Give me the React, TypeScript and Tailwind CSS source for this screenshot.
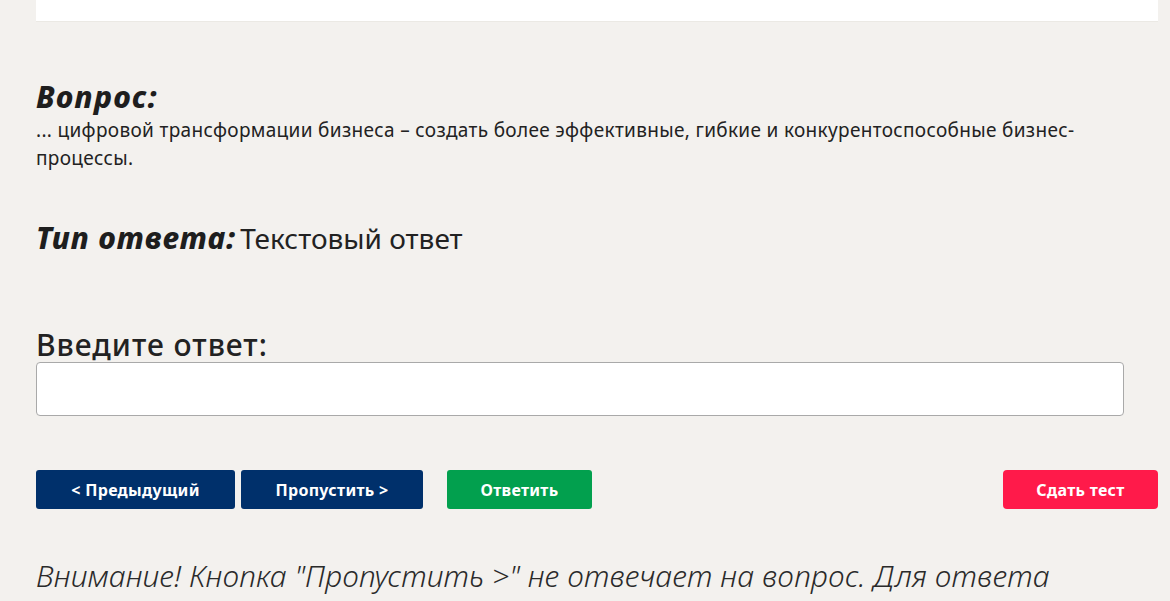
import React, { useState } from 'react';

const App: React.FC = () => {
  const [answer, setAnswer] = useState('');

  return (
    <div
      className="min-h-screen bg-[#f3f1ee] pl-[36px] pr-[12px] text-[#222]"
      style={{ fontFamily: '"Noto Sans", "Open Sans", sans-serif' }}
    >
      {/* Top card (scrolled off) */}
      <div className="h-[22px] bg-white border-b border-[#ebe9e4]" />

      {/* Question */}
      <div className="mt-[56px] w-[1088px]">
        <h2 className="text-[30px] leading-[38px] font-extrabold italic tracking-[1.5px] text-[#1e1e1e]">Вопрос:</h2>
        <p className="text-[19px] leading-[28px] tracking-[0.33px] text-[#222]">
          ... цифровой трансформации бизнеса – создать более эффективные, гибкие и конкурентоспособные бизнес-процессы.
        </p>
      </div>

      {/* Answer type */}
      <div className="mt-[46px] flex items-baseline gap-[4px]">
        <span className="text-[30px] leading-[40px] font-extrabold italic tracking-[1px] text-[#1e1e1e]">Тип ответа:</span>
        <span className="text-[28px] leading-[40px] text-[#222]">Текстовый ответ</span>
      </div>

      {/* Input */}
      <div className="mt-[70px] w-[1088px]">
        <label className="block text-[30px] leading-[34px] font-medium tracking-[1px] text-[#222]">Введите ответ:</label>
        <input
          type="text"
          value={answer}
          onChange={(e) => setAnswer(e.target.value)}
          className="block h-[54px] w-full rounded-[4px] border border-[#a9a9a9] bg-white px-3 outline-none"
        />
      </div>

      {/* Buttons */}
      <div className="mt-[54px] flex items-center justify-between">
        <div className="flex items-center">
          <button className="h-[39px] w-[199px] rounded-[3px] bg-[#00306b] text-[16px] font-bold tracking-[0.3px] text-white">
            &lt; Предыдущий
          </button>
          <button className="ml-[6px] h-[39px] w-[182px] rounded-[3px] bg-[#00306b] text-[16px] font-bold tracking-[0.3px] text-white">
            Пропустить &gt;
          </button>
          <button className="ml-[24px] h-[39px] w-[145px] rounded-[3px] bg-[#02a04e] text-[16px] font-bold tracking-[0.3px] text-white">
            Ответить
          </button>
        </div>
        <button className="h-[39px] w-[155px] rounded-[4px] bg-[#ff1a4a] text-[16px] font-bold tracking-[0.3px] text-white">
          Сдать тест
        </button>
      </div>

      {/* Warning */}
      <p className="mt-[47px] w-[1088px] text-[30px] leading-[40px] font-light italic tracking-[0.1px] text-[#2a2a2a]">
        Внимание! Кнопка "Пропустить &gt;" не отвечает на вопрос. Для ответа нажмите кнопку "Ответить".
      </p>
    </div>
  );
};

export default App;
